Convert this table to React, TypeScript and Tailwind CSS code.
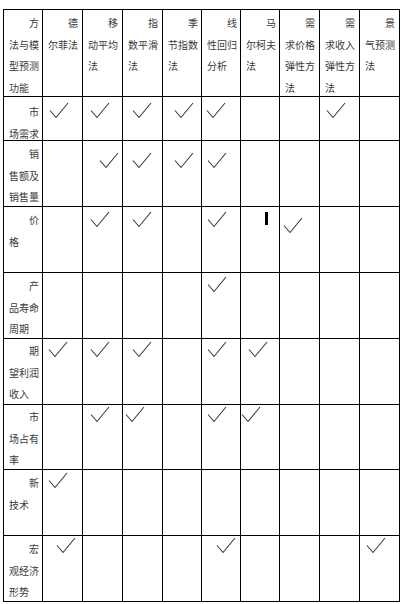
import { Fragment } from "react";

const font = { fontFamily: '"Noto Sans CJK SC", "Noto Sans", sans-serif' };

const headers = [
  "方法与模型预测功能",
  "德尔菲法",
  "移动平均法",
  "指数平滑法",
  "季节指数法",
  "线性回归分析",
  "马尔柯夫法",
  "需求价格弹性方法",
  "需求收入弹性方法",
  "景气预测法",
];

// checks: column index -> margin classes that place the tick inside its cell
type Row = { label: string; pt: string; checks: Record<number, string>; bar?: number };

const rows: Row[] = [
  {
    label: "市场需求",
    pt: "pt-[4px]",
    checks: {
      1: "ml-[6px] mt-[5px]",
      2: "ml-[7px] mt-[5px]",
      3: "ml-[9px] mt-[5px]",
      4: "ml-[11px] mt-[5px]",
      5: "ml-[4px] mt-[5px]",
      8: "ml-[6px] mt-[5px]",
    },
  },
  {
    label: "销售额及销售量",
    pt: "pt-[2px]",
    checks: {
      2: "ml-[16px] mt-[11px]",
      3: "ml-[9px] mt-[11px]",
      4: "ml-[11px] mt-[11px]",
      5: "ml-[5px] mt-[11px]",
    },
  },
  {
    label: "价格",
    pt: "pt-[2px]",
    checks: {
      2: "ml-[7px] mt-[4px]",
      3: "ml-[9px] mt-[4px]",
      5: "ml-[5px] mt-[4px]",
      7: "ml-[3px] mt-[10px]",
    },
    bar: 6,
  },
  {
    label: "产品寿命周期",
    pt: "pt-[2px]",
    checks: { 5: "ml-[5px] mt-[3px]" },
  },
  {
    label: "期望利润收入",
    pt: "pt-[1px]",
    checks: {
      1: "ml-[5px] mt-[2px]",
      2: "ml-[7px] mt-[2px]",
      3: "ml-[9px] mt-[2px]",
      5: "ml-[5px] mt-[2px]",
      6: "ml-[7px] mt-[2px]",
    },
  },
  {
    label: "市场占有率",
    pt: "pt-[1px]",
    checks: {
      2: "ml-[7px] mt-[1px]",
      3: "ml-[2px] mt-[1px]",
      5: "ml-[5px] mt-[1px]",
      6: "ml-[0px] mt-[1px]",
    },
  },
  {
    label: "新技术",
    pt: "pt-[2px]",
    checks: { 1: "ml-[5px] mt-[2px]" },
  },
  {
    label: "宏观经济形势",
    pt: "pt-[2px]",
    checks: {
      1: "ml-[13px] mt-[1px]",
      5: "ml-[14px] mt-[1px]",
      9: "ml-[6px] mt-[1px]",
    },
  },
];

function Tick({ className }: { className: string }) {
  return (
    <svg width="20" height="17" viewBox="0 0 20 17" className={"block " + className}>
      <path d="M1 8.5 L7 15.5 L19 1" fill="none" stroke="#3a3a3a" strokeWidth="1.1" />
    </svg>
  );
}

function Label({ text, pt }: { text: string; pt: string }) {
  return (
    <div
      className={"bg-white pl-[5px] pr-[2px] text-[10px] leading-[21.5px] text-[#3a3a3a] indent-[20px] break-all " + pt}
      style={font}
    >
      {text}
    </div>
  );
}

export default function App() {
  return (
    <div className="min-h-screen bg-white pt-[9px] pl-[3px]">
      <div className="grid w-fit grid-cols-[38px_39px_39px_39px_38px_38px_38px_39px_39px_39px] grid-rows-[86px_43px_65px_65px_65px_65px_64px_65px_65px] gap-px bg-black p-px">
        {headers.map((h) => (
          <Label key={h} text={h} pt="pt-[2px]" />
        ))}
        {rows.map((r) => (
          <Fragment key={r.label}>
            <Label text={r.label} pt={r.pt} />
            {Array.from({ length: 9 }, (_, k) => k + 1).map((c) => (
              <div key={c} className="bg-white">
                {r.checks[c] && <Tick className={r.checks[c]} />}
                {r.bar === c && <div className="ml-[24px] mt-[5px] h-[13px] w-[3px] bg-black" />}
              </div>
            ))}
          </Fragment>
        ))}
      </div>
    </div>
  );
}
